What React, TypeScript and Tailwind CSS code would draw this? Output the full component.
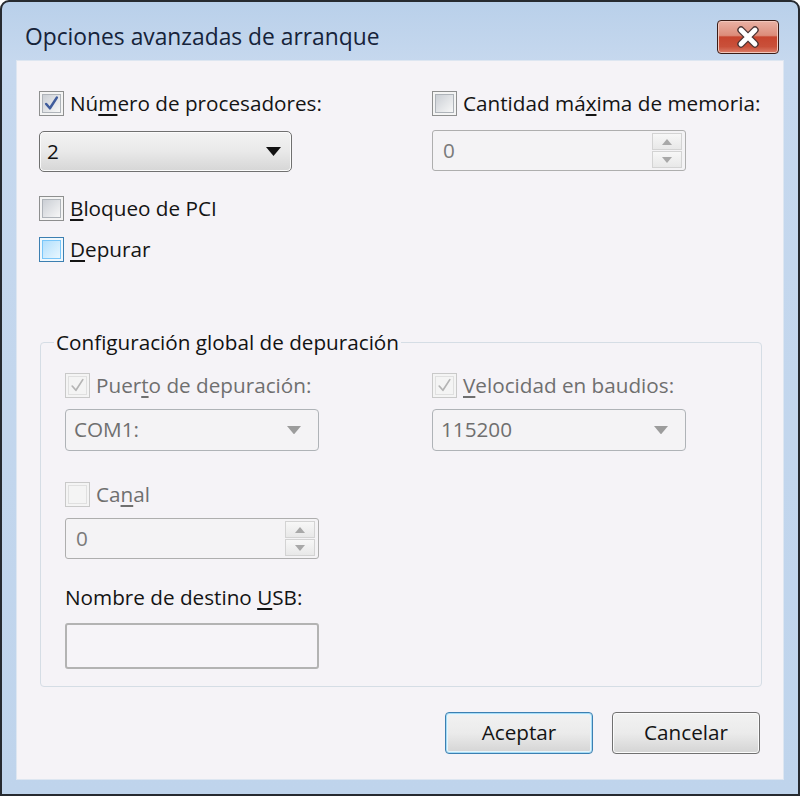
import React from "react";

const FONT = { fontFamily: '"Open Sans", "Noto Sans", Arial, sans-serif' };

function CheckMark({ disabled }: { disabled?: boolean }): React.ReactElement {
  return (
    <svg viewBox="0 0 16 16" className="h-[17px] w-[17px]" aria-hidden>
      <path
        d="M3 8.5 L6.5 12.5 L13 2.5"
        fill="none"
        stroke={disabled ? "#b4b4b4" : "#3f5c9c"}
        strokeWidth={disabled ? 1.6 : 2.4}
        strokeLinejoin="round"
        strokeLinecap="round"
      />
    </svg>
  );
}

function Checkbox({
  checked,
  disabled,
  hot,
}: {
  checked?: boolean;
  disabled?: boolean;
  hot?: boolean;
}): React.ReactElement {
  const outer = disabled
    ? "border-[#c9c9c9] bg-[#f4f4f4]"
    : hot
      ? "border-[#3c7fb1] bg-[#f0f8fd]"
      : "border-[#8e8f8f] bg-[#f4f4f4]";
  const inner = disabled
    ? "border-[#e0e0e0] bg-[#f4f4f4]"
    : hot
      ? "border-[#79c6f9] bg-gradient-to-br from-[#b1dffd] to-[#e9f7fe]"
      : "border-[#aeb3b9] bg-gradient-to-br from-[#cbcfd5] to-[#f7f7f7]";
  return (
    <div className={`flex h-[25px] w-[25px] shrink-0 items-center justify-center border p-[2px] ${outer}`}>
      <div className={`flex h-full w-full items-center justify-center border ${inner}`}>
        {checked ? <CheckMark disabled={disabled} /> : null}
      </div>
    </div>
  );
}

function CheckRow({
  label,
  checked,
  disabled,
  hot,
}: {
  label: React.ReactNode;
  checked?: boolean;
  disabled?: boolean;
  hot?: boolean;
}): React.ReactElement {
  return (
    <div className="flex h-[25px] items-center gap-[6px]">
      <Checkbox checked={checked} disabled={disabled} hot={hot} />
      <span
        className={`whitespace-nowrap text-[20.7px] leading-[25px] ${disabled ? "text-[#6f6f6f]" : "text-[#141414]"}`}
      >
        {label}
      </span>
    </div>
  );
}

function Arrow({ color, size }: { color: string; size: number }): React.ReactElement {
  return (
    <svg width={size} height={size * 0.6} viewBox="0 0 10 6" aria-hidden>
      <path d="M0 0 L10 0 L5 6 Z" fill={color} />
    </svg>
  );
}

function Combo({ value, disabled }: { value: string; disabled?: boolean }): React.ReactElement {
  if (disabled) {
    return (
      <div className="flex h-[42px] w-[254px] items-center justify-between rounded-[4px] border border-[#afb3b7] bg-[#f4f3f5] pl-[8px] pr-[17px]">
        <span className="text-[20.7px] text-[#6f6f6f]">{value}</span>
        <Arrow color="#9c9c9c" size={14} />
      </div>
    );
  }
  return (
    <div className="flex h-[41px] w-[253px] items-center justify-between rounded-[5px] border border-[#707070] bg-gradient-to-b from-[#f3f3f3] via-[#e9e9e9] to-[#d6d6d6] pl-[7px] pr-[10px] shadow-[inset_0_0_0_1px_#fbfbfb]">
      <span className="text-[20.7px] text-[#111]">{value}</span>
      <Arrow color="#111" size={15} />
    </div>
  );
}

function SpinBtn({ up }: { up?: boolean }): React.ReactElement {
  return (
    <div className="flex h-[17px] w-[30px] items-center justify-center border border-[#d3d3d3] bg-gradient-to-b from-[#f7f7f7] to-[#e8e8e8]">
      <svg width="10" height="6" viewBox="0 0 10 6" aria-hidden>
        <path d={up ? "M0 6 L10 6 L5 0 Z" : "M0 0 L10 0 L5 6 Z"} fill="#a8a8a8" />
      </svg>
    </div>
  );
}

function Spin({ value }: { value: string }): React.ReactElement {
  return (
    <div className="flex h-[41px] w-[254px] items-center justify-between rounded-[3px] border border-[#aeaeae] bg-[#f4f3f5] pl-[10px] pr-[3px]">
      <span className="text-[20.7px] text-[#7a7a7a]">{value}</span>
      <div className="flex flex-col gap-[1px]">
        <SpinBtn up />
        <SpinBtn />
      </div>
    </div>
  );
}

function Button({ label, primary }: { label: string; primary?: boolean }): React.ReactElement {
  return (
    <button
      type="button"
      className={`flex h-[42px] w-[148px] items-center justify-center rounded-[4px] border bg-gradient-to-b from-[#f2f2f2] via-[#ebebeb] to-[#d4d4d4] text-[20.7px] text-[#141414] ${
        primary
          ? "border-[#3c7fb1] shadow-[inset_0_0_0_1px_#a6dcf6,inset_0_0_0_2px_#e7f5fc]"
          : "border-[#707070] shadow-[inset_0_0_0_1px_#fbfbfb]"
      }`}
    >
      {label}
    </button>
  );
}

function CloseButton(): React.ReactElement {
  return (
    <div className="flex h-[34px] w-[62px] items-center justify-center rounded-[4px] border border-[#3b1d17] bg-[linear-gradient(to_bottom,#eab2a5_0%,#dc8c7a_45%,#c7452f_50%,#c9503a_80%,#dc7f6b_100%)] shadow-[inset_0_0_0_1px_#f2c6bb]">
      <svg width="30" height="22" viewBox="0 0 30 22" aria-hidden>
        <path d="M8 4 L22 18 M22 4 L8 18" stroke="#4a3434" strokeWidth="7.4" strokeLinecap="round" />
        <path d="M8 4 L22 18 M22 4 L8 18" stroke="#ffffff" strokeWidth="4.8" strokeLinecap="round" />
      </svg>
    </div>
  );
}

export default function App(): React.ReactElement {
  return (
    <div style={FONT} className="h-[796px] w-[800px] bg-white">
      <div className="flex h-full w-full flex-col rounded-t-[9px] border-2 border-[#262a30] bg-[linear-gradient(to_bottom,#b9d0ea,#c6d8ee_60px,#bfd4ec)]">
        <div className="flex h-[58px] items-start justify-between pl-[23px] pr-[19px] pt-[18px]">
          <span className="whitespace-nowrap text-[22.8px] leading-[34px] text-[#16233a]">
            Opciones avanzadas de arranque
          </span>
          <CloseButton />
        </div>
        <div className="mx-[14px] mb-[14px] flex flex-1 flex-col border border-[#dde6f1] bg-[#f5f3f7] pl-[22px] pr-[23px] pt-[30px]">
          <div className="grid grid-cols-[393px_1fr]">
            <div className="flex flex-col">
              <CheckRow
                checked
                label={
                  <>
                    Nú<u className="underline-offset-[3px]">m</u>ero de procesadores:
                  </>
                }
              />
              <div className="mt-[15px]">
                <Combo value="2" />
              </div>
              <div className="mt-[24px]">
                <CheckRow
                  label={
                    <>
                      <u className="underline-offset-[3px]">B</u>loqueo de PCI
                    </>
                  }
                />
              </div>
              <div className="mt-[16px]">
                <CheckRow
                  hot
                  label={
                    <>
                      <u className="underline-offset-[3px]">D</u>epurar
                    </>
                  }
                />
              </div>
            </div>
            <div className="flex flex-col">
              <CheckRow
                label={
                  <>
                    Cantidad má<u className="underline-offset-[3px]">x</u>ima de memoria:
                  </>
                }
              />
              <div className="mt-[14px]">
                <Spin value="0" />
              </div>
            </div>
          </div>

          <fieldset className="ml-[1px] mr-[-2px] mt-[68px] rounded-[4px] border border-[#d5dde5]">
            <legend className="ml-[13px] px-[2px] text-[20.7px] leading-[24px] text-[#121212]">
              Configuración global de depuración
            </legend>
            <div className="grid grid-cols-[367px_1fr] pb-[17px] pl-[24px] pt-[19px]">
              <div className="flex flex-col">
                <CheckRow
                  checked
                  disabled
                  label={
                    <>
                      Puer<u className="underline-offset-[3px]">t</u>o de depuración:
                    </>
                  }
                />
                <div className="mt-[11px]">
                  <Combo value="COM1:" disabled />
                </div>
                <div className="mt-[31px]">
                  <CheckRow
                    disabled
                    label={
                      <>
                        Ca<u className="underline-offset-[3px]">n</u>al
                      </>
                    }
                  />
                </div>
                <div className="mt-[11px]">
                  <Spin value="0" />
                </div>
                <div className="mt-[26px] text-[20.7px] leading-[25px] text-[#141414]">
                  Nombre de destino <u className="underline-offset-[3px]">U</u>SB:
                </div>
                <div className="mt-[13px] h-[46px] w-[254px] rounded-[3px] border-2 border-[#b3b3b3] bg-[#f6f4f8]" />
              </div>
              <div className="flex flex-col">
                <CheckRow
                  checked
                  disabled
                  label={
                    <>
                      <u className="underline-offset-[3px]">V</u>elocidad en baudios:
                    </>
                  }
                />
                <div className="mt-[11px]">
                  <Combo value="115200" disabled />
                </div>
              </div>
            </div>
          </fieldset>

          <div className="mt-[25px] flex justify-end gap-[19px]">
            <Button label="Aceptar" primary />
            <Button label="Cancelar" />
          </div>
        </div>
      </div>
    </div>
  );
}
